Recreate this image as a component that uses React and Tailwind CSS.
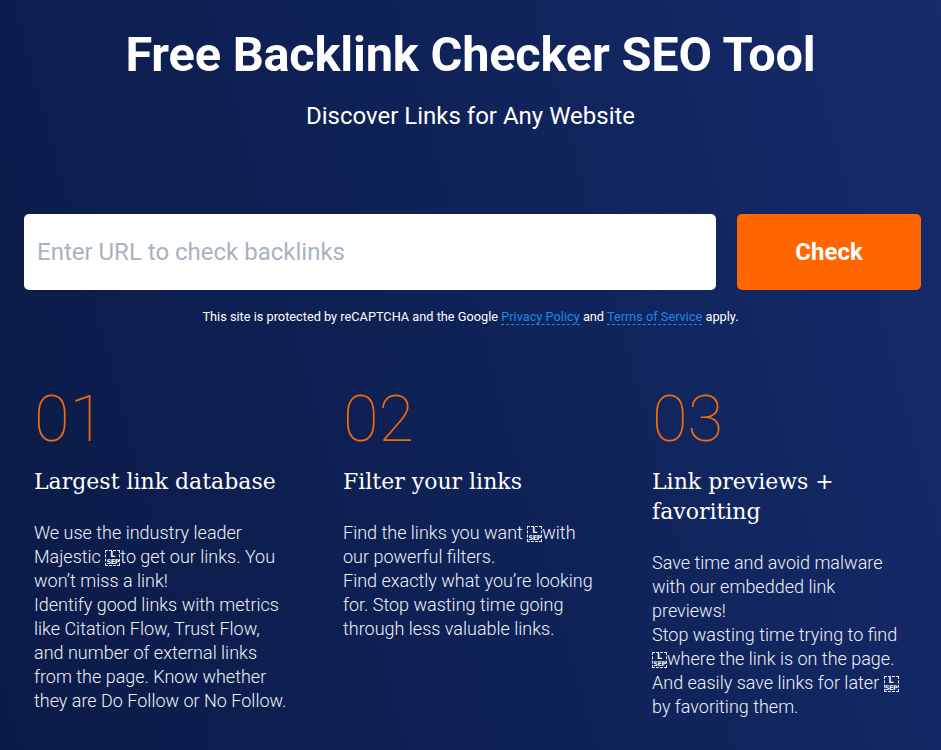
import React from "react";

// stand-in for the "L SEP" glyph box shown by the original page
function Sep() {
  return (
    <span className="inline-block h-[16px] w-[15px] overflow-hidden border border-dashed border-white/90 align-[-3px] text-center font-['DejaVu_Sans',sans-serif] font-bold">
      <span className="block text-[8px] leading-[8px]">L</span>
      <span className="block text-[6.5px] leading-[6px] tracking-[-0.4px]">SEP</span>
    </span>
  );
}

const features = [
  {
    num: "01",
    title: "Largest link database",
    body: [
      <>We use the industry leader Majestic <Sep />to get our links. You won’t miss a link!</>,
      <>Identify good links with metrics like Citation Flow, Trust Flow, and number of external links from the page. Know whether they are Do Follow or No Follow.</>,
    ],
  },
  {
    num: "02",
    title: "Filter your links",
    body: [
      <>Find the links you want <Sep />with our powerful filters.</>,
      <>Find exactly what you’re looking for. Stop wasting time going through less valuable links.</>,
    ],
  },
  {
    num: "03",
    title: "Link previews + favoriting",
    body: [
      <>Save time and avoid malware with our embedded link previews!</>,
      <>Stop wasting time trying to find <Sep />where the link is on the page. And easily save links for later <Sep /> by favoriting them.</>,
    ],
  },
];

export default function App() {
  return (
    <div className="min-h-[750px] w-full bg-[linear-gradient(75deg,#0b1b48_0%,#0f2257_50%,#152b6b_100%)] font-['Roboto',sans-serif] text-white">
      {/* hero */}
      <div className="flex flex-col items-center pt-[27px]">
        <h1 className="text-[48.7px] font-bold leading-[56px] tracking-[-0.2px]">Free Backlink Checker SEO Tool</h1>
        <p className="mt-[18px] text-[24px] leading-[30px]">Discover Links for Any Website</p>
      </div>

      {/* search */}
      <div className="mt-[83px] flex gap-[21px] pl-[24px] pr-[20px]">
        <input
          type="text"
          placeholder="Enter URL to check backlinks"
          className="h-[76px] flex-1 rounded-[5px] bg-white px-[13px] text-[24px] text-gray-800 outline-none placeholder:text-[#a8b3c1]"
        />
        <button className="h-[76px] w-[184px] rounded-[5px] bg-[#ff6600] text-[24px] font-bold text-white">Check</button>
      </div>
      <p className="mt-[19px] text-center text-[12.75px] leading-[16px]">
        This site is protected by reCAPTCHA and the Google{" "}
        <a className="border-b border-dashed border-[#1e88e5] text-[#1e88e5]">Privacy Policy</a> and{" "}
        <a className="border-b border-dashed border-[#1e88e5] text-[#1e88e5]">Terms of Service</a> apply.
      </p>

      {/* features */}
      <div className="mt-[60px] grid grid-cols-[255px_255px_255px] gap-x-[54px] pl-[34px]">
        {features.map((f) => (
          <div key={f.num}>
            <div className="text-[65px] font-thin leading-[68px] text-[#f26a0f]">{f.num}</div>
            <h3 className="mt-[14px] font-['DejaVu_Serif',serif] text-[22px] leading-[30px]">{f.title}</h3>
            <div className="mt-[24px] text-[18px] font-light leading-[24px] text-[#eef2f8]">
              {f.body.map((b, i) => (
                <p key={i}>{b}</p>
              ))}
            </div>
          </div>
        ))}
      </div>
    </div>
  );
}
